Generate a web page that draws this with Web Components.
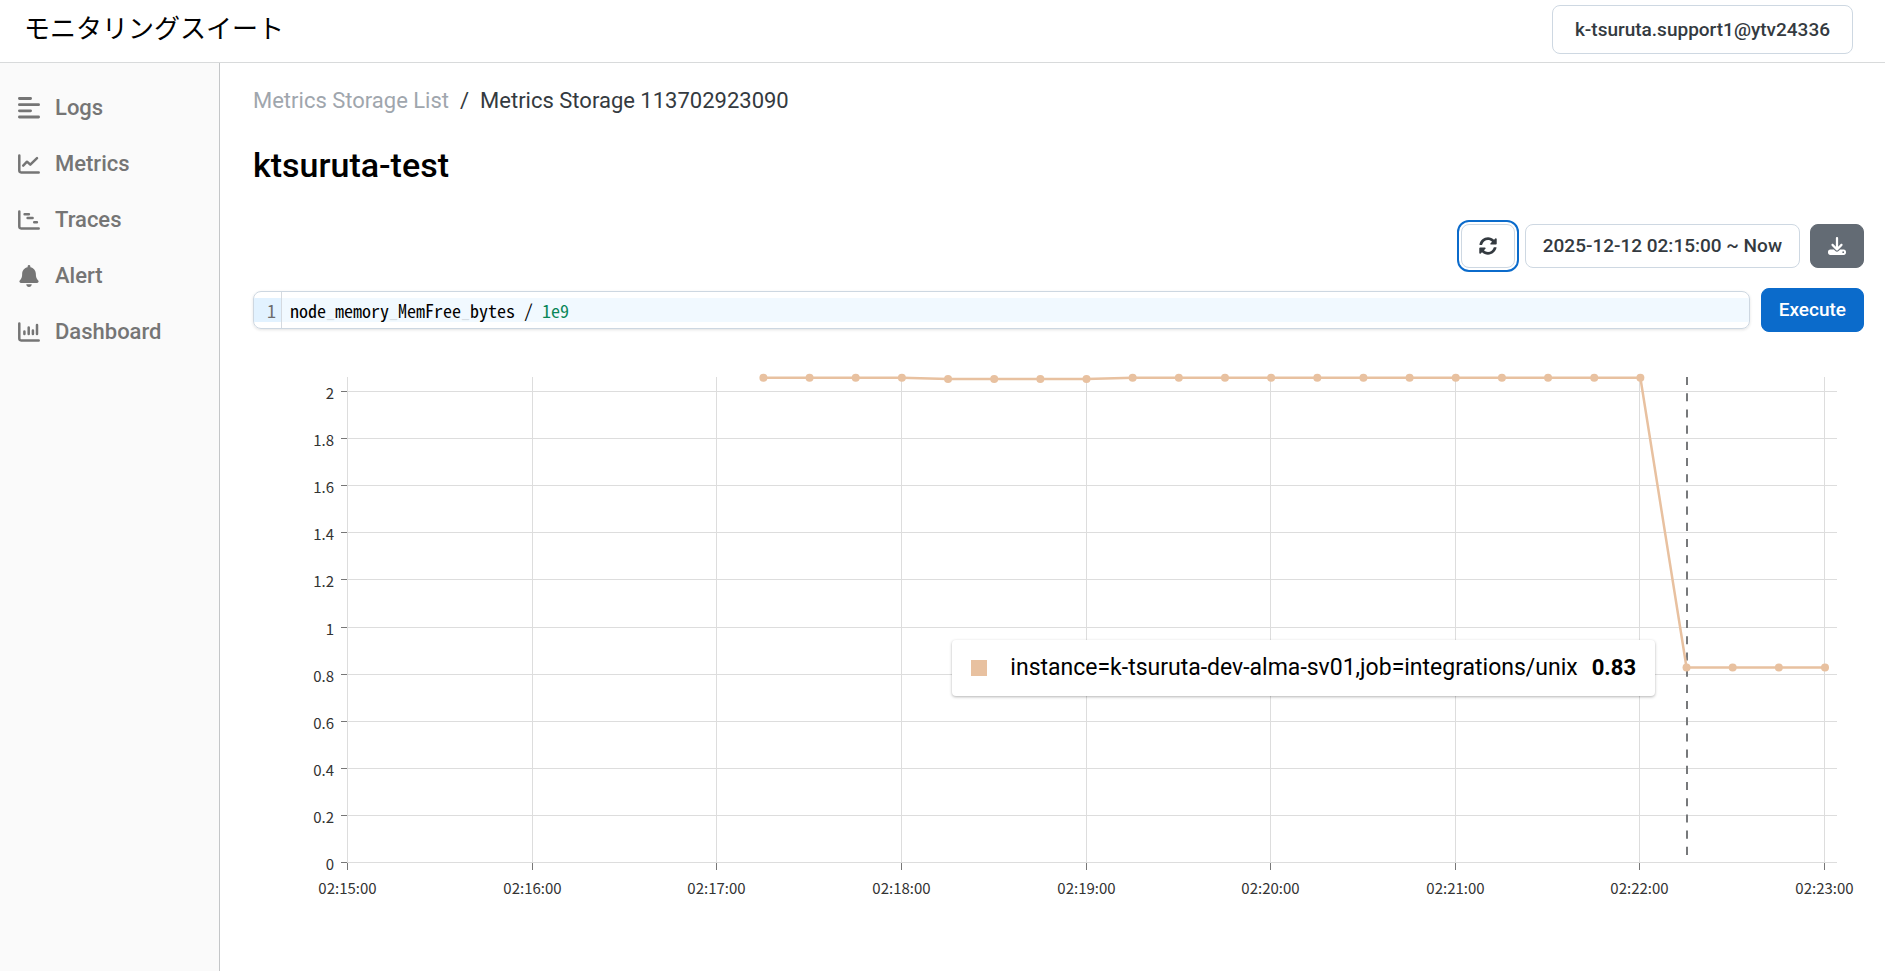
<!DOCTYPE html>
<html lang="ja">
<head>
<meta charset="utf-8">
<title>モニタリングスイート</title>
<style>
  html, body {
    height: 100%;
    margin: 0;
  }

  body {
    background: #fff;
    color: #343a40;
    font-family: Roboto, "Noto Sans CJK JP", sans-serif;
    font-size: 22px;
  }
</style>
</head>
<body>
<monitoring-app></monitoring-app>

<script>
const ICONS = {
  logs: {
    box: "0 0 22 22",
    body: `<path fill="none" stroke="currentColor" stroke-width="2.8" stroke-linecap="round" d="M1.4 1.5H12.6M1.4 7.7H20.6M1.4 13.8H12.6M1.4 20H20.6"/>`,
  },
  metrics: {
    box: "0 0 22 22",
    body: `<path fill="none" stroke="currentColor" stroke-width="2.5" stroke-linecap="round" stroke-linejoin="round" d="M1.3 2.5V17.6Q1.3 19.4 3.1 19.4H20.7M5.2 12.6L9 8.7L12.3 11.7L19 5.2"/>`,
  },
  traces: {
    box: "0 0 22 22",
    body: `<path fill="none" stroke="currentColor" stroke-width="2.5" stroke-linecap="round" stroke-linejoin="round" d="M1.3 2.5V17.6Q1.3 19.4 3.1 19.4H20.7M6.6 5.2H10.9M9.6 9H14.6M16.2 13.3H18.9"/>`,
  },
  alert: {
    box: "0 0 448 512",
    body: `<path fill="currentColor" d="M224 0c-17.700 0-32 14.300-32 32l0 19.200C119 66 64 130.600 64 208l0 18.800c0 47-17.300 92.400-48.500 127.600l-7.400 8.300c-8.400 9.400-10.400 22.900-5.300 34.400S19.400 416 32 416l384 0c12.600 0 24-7.400 29.200-18.900s3.100-25-5.300-34.400l-7.400-8.300C401.300 319.200 384 273.900 384 226.800l0-18.800c0-77.400-55-142-128-156.800L256 32c0-17.700-14.300-32-32-32zm45.300 493.300c12-12 18.700-28.300 18.700-45.300l-64 0-64 0c0 17 6.700 33.300 18.700 45.300s28.300 18.700 45.300 18.700s33.300-6.700 45.300-18.700z"/>`,
  },
  dashboard: {
    box: "0 0 22 22",
    body: `<path fill="none" stroke="currentColor" stroke-width="2.5" stroke-linecap="round" stroke-linejoin="round" d="M1.3 2.5V17.6Q1.3 19.4 3.1 19.4H20.7M6.4 10.600V13M10.700 6.400V13M14.900 9.600V13M19 3.900V13"/>`,
  },
  refresh: {
    box: "0 0 512 512",
    body: `<path fill="currentColor" d="M370.720 133.280C339.458 104.008 298.888 87.962 255.848 88c-77.458.068-144.328 53.178-162.791 126.850-1.344 5.363-6.122 9.150-11.651 9.150H24.103c-7.498 0-13.194-6.807-11.807-14.176C33.933 94.924 134.813 8 256 8c66.448 0 126.791 26.136 171.315 68.685L463.030 40.970C478.149 25.851 504 36.559 504 57.941V192c0 13.255-10.745 24-24 24H345.941c-21.382 0-32.090-25.851-16.971-40.971l41.750-41.749zM32 296h134.059c21.382 0 32.090 25.851 16.971 40.971l-41.750 41.750c31.262 29.273 71.835 45.319 114.876 45.280 77.418-.070 144.315-53.144 162.787-126.849 1.344-5.363 6.122-9.150 11.651-9.150h57.304c7.498 0 13.194 6.807 11.807 14.176C478.067 417.076 377.187 504 256 504c-66.448 0-126.791-26.136-171.315-68.685L48.970 471.030C33.851 486.149 8 475.441 8 454.059V320c0-13.255 10.745-24 24-24z"/>`,
  },
  download: {
    box: "0 0 512 512",
    body: `<path fill="currentColor" d="M288 32c0-17.700-14.300-32-32-32s-32 14.300-32 32V274.700l-73.400-73.400c-12.500-12.500-32.800-12.500-45.300 0s-12.500 32.800 0 45.300l128 128c12.500 12.500 32.800 12.500 45.300 0l128-128c12.500-12.500 12.500-32.800 0-45.300s-32.800-12.500-45.300 0L288 274.700V32zM64 352c-35.300 0-64 28.700-64 64v32c0 35.300 28.700 64 64 64H448c35.300 0 64-28.700 64-64V416c0-35.300-28.700-64-64-64H346.500l-45.300 45.300c-25 25-65.500 25-90.500 0L165.500 352H64zm368 56a24 24 0 1 1 0 48 24 24 0 1 1 0-48z"/>`,
  },
}

class AppIcon extends HTMLElement {
  connectedCallback () {
    const { box, body } = ICONS[this.getAttribute("name")];

    this.attachShadow({ mode: "open" }).innerHTML = `
      <style>
        :host {
          display: block;
          flex: none;
          width: 22px;
          height: 22px;
        }

        svg {
          display: block;
          width: 100%;
          height: 100%;
        }
      </style>
      <svg viewBox="${box}" aria-hidden="true">${body}</svg>
    `;
  }
}

class AppButton extends HTMLElement {
  connectedCallback () {
    const label = this.getAttribute("label");

    this.attachShadow({ mode: "open" }).innerHTML = `
      <style>
        :host {
          display: block;
          flex: none;
        }

        button {
          display: flex;
          align-items: center;
          justify-content: center;
          box-sizing: border-box;
          min-height: 44px;
          padding: 0 17px;
          border: 1px solid #ced8e2;
          border-radius: 8px;
          background: #fff;
          color: #343a40;
          font: inherit;
          font-size: 19px;
          font-weight: 500;
          line-height: 24px;
          cursor: pointer;
        }

        :host([kind="user"]) button {
          min-height: 49px;
          padding: 0 22px;
        }

        :host([kind="primary"]) button {
          border-color: #0b6bcb;
          background: #0b6bcb;
          color: #fff;
        }

        :host([kind="dark"]) button {
          border-color: #636b74;
          background: #636b74;
          color: #fff;
        }

        :host([focused]) button {
          outline: 2px solid #0b6bcb;
          outline-offset: 2px;
        }
      </style>
      <button type="button" ${label ? `aria-label="${label}"` : ""}><slot></slot></button>
    `;
  }
}

class AppHeader extends HTMLElement {
  connectedCallback () {
    this.attachShadow({ mode: "open" }).innerHTML = `
      <style>
        :host {
          display: flex;
          align-items: flex-start;
          justify-content: space-between;
          box-sizing: border-box;
          height: 63px;
          padding: 5px 32px 0 24px;
          border-bottom: 1px solid #d8dadb;
        }

        .brand {
          color: #000;
          font-family: "Noto Sans CJK JP", sans-serif;
          font-size: 26px;
          font-weight: 400;
          line-height: 44px;
        }
      </style>
      <div class="brand"><slot></slot></div>
      <slot name="user"></slot>
    `;
  }
}

class NavItem extends HTMLElement {
  connectedCallback () {
    this.attachShadow({ mode: "open" }).innerHTML = `
      <style>
        :host {
          display: block;
        }

        a {
          display: flex;
          align-items: center;
          gap: 15px;
          height: 56px;
          padding-left: 18px;
          color: #757575;
          font-weight: 500;
          line-height: 28px;
          text-decoration: none;
        }
      </style>
      <a href="#${this.getAttribute("icon")}">
        <app-icon name="${this.getAttribute("icon")}"></app-icon>
        <slot></slot>
      </a>
    `;
  }
}

class SideNav extends HTMLElement {
  connectedCallback () {
    this.attachShadow({ mode: "open" }).innerHTML = `
      <style>
        :host {
          display: block;
          flex: none;
          box-sizing: border-box;
          width: 220px;
          padding-top: 17px;
          border-right: 1px solid #c4c6c8;
          background: #fafafa;
        }
      </style>
      <nav><slot></slot></nav>
    `;
  }
}

class QueryEditor extends HTMLElement {
  connectedCallback () {
    this.attachShadow({ mode: "open" }).innerHTML = `
      <style>
        :host {
          display: flex;
          flex: 1;
          box-sizing: border-box;
          min-width: 0;
          height: 38px;
          overflow: hidden;
          border: 1px solid #cdd7e1;
          border-radius: 8px;
          box-shadow: 0 1px 3px rgba(21, 21, 21, 0.12);
          font-family: "Noto Sans Mono CJK JP", "Liberation Mono", monospace;
          font-size: 18px;
          line-height: 24px;
        }

        .gutter {
          box-sizing: border-box;
          width: 28px;
          padding: 6px 0;
          border-right: 1px solid #d5dae0;
          color: #6c6c6c;
          text-align: right;
        }

        .number {
          padding-right: 5px;
          background: #e2f2ff;
        }

        .line {
          flex: 1;
          height: 24px;
          margin: 6px 0;
          padding-left: 8px;
          background: #f1f9ff;
          color: #000;
          outline: none;
          white-space: pre;
        }

        .joint {
          color: #d5dde3;
        }

        .literal {
          color: #098658;
        }
      </style>
      <div class="gutter"><div class="number">1</div></div>
      <div class="line" contenteditable="true" spellcheck="false" role="textbox" aria-label="Query"></div>
    `;

    this.shadowRoot.querySelector(".line").innerHTML = this.#highlight(this.getAttribute("value"));
  }

  #highlight (query) {
    return query
      .replace(/\b\d\w*/g, "<span class=literal>$&</span>")
      .replace(/_/g, "<span class=joint>_</span>");
  }
}

class MetricsChart extends HTMLElement {
  #config = {
    HEIGHT: 560,
    TOP: 26,
    LEFT: 95,
    RIGHT: 27,
    RIGHT_PADDING: 12,
    BASELINE: 511,
    UNIT: 235.5,
    MINUTES: 8,
    COLOR: "#e8c1a0",
  }

  // one value for every 15 seconds, the first one at 02:17:15
  #start = 9;
  #values = [
    2.06, 2.06, 2.06, 2.06,
    2.055, 2.055, 2.055, 2.055,
    2.06, 2.06, 2.06, 2.06,
    2.06, 2.06, 2.06, 2.06,
    2.06, 2.06, 2.06, 2.06,
    0.83, 0.83, 0.83, 0.83,
  ];
  #active = 20;

  connectedCallback () {
    this.attachShadow({ mode: "open" }).innerHTML = `
      <style>
        :host {
          display: block;
          position: relative;
          height: ${this.#config.HEIGHT}px;
        }

        svg {
          display: block;
          width: 100%;
          height: 100%;
          overflow: visible;
        }

        text {
          fill: #333;
          font-family: "Noto Sans CJK JP", sans-serif;
          font-size: 15px;
        }

        .tooltip {
          position: absolute;
          display: flex;
          align-items: center;
          box-sizing: border-box;
          height: 56px;
          padding: 0 19px;
          border-radius: 4px;
          background: #fff;
          box-shadow: 0 1px 3px rgba(0, 0, 0, 0.3);
          color: #000;
          font-size: 23px;
          line-height: 28px;
          white-space: nowrap;
        }

        .swatch {
          width: 16px;
          height: 16px;
          margin-right: 23px;
          background: ${this.#config.COLOR};
        }

        strong {
          margin-left: 14px;
          font-size: 22px;
          font-weight: 700;
        }
      </style>
      <svg role="img" aria-label="node_memory_MemFree_bytes"></svg>
      <div class="tooltip">
        <span class="swatch"></span>
        <span>instance=k-tsuruta-dev-alma-sv01,job=integrations/unix</span>
        <strong>${this.#values[this.#active]}</strong>
      </div>
    `;

    this.#draw();

    window.addEventListener("resize", () => {
      this.#draw();
    })
  }

  #draw () {
    const { TOP, LEFT, RIGHT, RIGHT_PADDING, BASELINE, UNIT, MINUTES, COLOR } = this.#config;
    const { width } = this.getBoundingClientRect();
    const end = width - RIGHT;
    const minute = (end - RIGHT_PADDING - LEFT) / MINUTES;

    const getX = (index) => LEFT + (this.#start + index) * minute / 4;
    const getY = (value) => BASELINE - value * UNIT;

    const parts = [];

    for (let i = 0; i <= 10; i++) {
      const y = Math.round(getY(i / 5)) - 0.5;
      parts.push(`<path stroke="#ddd" d="M${LEFT} ${y}H${end}"/>`);
      parts.push(`<path stroke="#777" d="M${LEFT - 7} ${y}H${LEFT}"/>`);
      parts.push(`<text x="${LEFT - 14}" y="${y + 7}" text-anchor="end">${i / 5}</text>`);
    }

    for (let i = 0; i <= MINUTES; i++) {
      const x = Math.round(LEFT + i * minute) - 0.5;
      parts.push(`<path stroke="#ddd" d="M${x} ${TOP - 1}V${BASELINE}"/>`);
      parts.push(`<path stroke="#777" d="M${x} ${BASELINE}v7"/>`);
      parts.push(`<text x="${x}" y="${BASELINE + 31}" text-anchor="middle">02:${15 + i}:00</text>`);
    }

    const points = this.#values.map((value, index) => [getX(index), getY(value)]);
    const [activeX, activeY] = points[this.#active];

    parts.push(`<path stroke="#77797b" stroke-width="2" stroke-dasharray="8.1" d="M${Math.round(activeX)} ${TOP - 1}V${BASELINE - 8}"/>`);
    parts.push(`<polyline fill="none" stroke="${COLOR}" stroke-width="2.5" points="${points.join(" ")}"/>`);

    points.forEach(([x, y]) => {
      parts.push(`<circle fill="${COLOR}" cx="${x}" cy="${y}" r="4"/>`);
    })

    this.shadowRoot.querySelector("svg").innerHTML = parts.join("");

    const tooltip = this.shadowRoot.querySelector(".tooltip");
    tooltip.style.right = `${Math.round(width - activeX + 32)}px`;
    tooltip.style.top = `${Math.round(activeY - 28)}px`;
  }
}

class StoragePage extends HTMLElement {
  connectedCallback () {
    this.attachShadow({ mode: "open" }).innerHTML = `
      <style>
        :host {
          display: block;
          flex: 1;
          min-width: 0;
          padding: 23px 21px 0 33px;
        }

        .breadcrumb {
          display: flex;
          gap: 11px;
          font-weight: 400;
          line-height: 30px;
        }

        a {
          color: #9fa6ad;
          text-decoration: none;
        }

        h1 {
          margin: 28px 0 38px;
          color: #000;
          font-size: 34px;
          font-weight: 500;
          line-height: 42px;
        }

        .toolbar {
          display: flex;
          justify-content: flex-end;
          gap: 10px;
        }

        .toolbar app-icon {
          width: 18px;
          height: 18px;
        }

        .query {
          display: flex;
          align-items: center;
          gap: 11px;
          margin: 20px 0;
        }
      </style>
      <nav class="breadcrumb" aria-label="Breadcrumb">
        <a href="#metrics">Metrics Storage List</a>
        <span>/</span>
        <span>Metrics Storage 113702923090</span>
      </nav>
      <h1>ktsuruta-test</h1>
      <div class="toolbar">
        <app-button label="Refresh" focused><app-icon name="refresh"></app-icon></app-button>
        <app-button>2025-12-12 02:15:00 ~ Now</app-button>
        <app-button label="Download" kind="dark"><app-icon name="download"></app-icon></app-button>
      </div>
      <div class="query">
        <query-editor value="node_memory_MemFree_bytes / 1e9"></query-editor>
        <app-button kind="primary">Execute</app-button>
      </div>
      <metrics-chart></metrics-chart>
    `;
  }
}

class MonitoringApp extends HTMLElement {
  connectedCallback () {
    this.attachShadow({ mode: "open" }).innerHTML = `
      <style>
        :host {
          display: flex;
          flex-direction: column;
          min-height: 100%;
        }

        main {
          display: flex;
          flex: 1;
        }
      </style>
      <app-header>
        モニタリングスイート
        <app-button slot="user" kind="user">k-tsuruta.support1@ytv24336</app-button>
      </app-header>
      <main>
        <side-nav>
          <nav-item icon="logs">Logs</nav-item>
          <nav-item icon="metrics">Metrics</nav-item>
          <nav-item icon="traces">Traces</nav-item>
          <nav-item icon="alert">Alert</nav-item>
          <nav-item icon="dashboard">Dashboard</nav-item>
        </side-nav>
        <storage-page></storage-page>
      </main>
    `;
  }
}

customElements.define('app-icon', AppIcon);
customElements.define('app-button', AppButton);
customElements.define('app-header', AppHeader);
customElements.define('nav-item', NavItem);
customElements.define('side-nav', SideNav);
customElements.define('query-editor', QueryEditor);
customElements.define('metrics-chart', MetricsChart);
customElements.define('storage-page', StoragePage);
customElements.define('monitoring-app', MonitoringApp);
</script>
</body>
</html>
